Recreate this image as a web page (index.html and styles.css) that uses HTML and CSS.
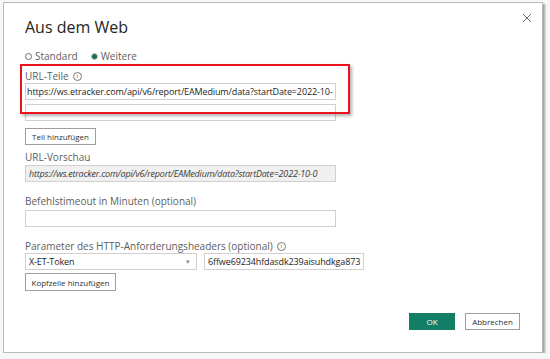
FILE: index.html
```html
<!DOCTYPE html>
<html lang="de">
<head>
  <meta charset="UTF-8" />
  <title>Aus dem Web</title>
  <link rel="stylesheet" href="styles.css">
</head>
<body>
  <div class="dialog">
    <button class="close" aria-label="Schließen">
      <svg width="10" height="10" viewBox="0 0 10 10"><path d="M1 1L9 9M9 1L1 9" stroke="#6e6e6e" stroke-width="1"/></svg>
    </button>
    <h1 class="title">Aus dem Web</h1>

    <div class="radios">
      <label class="radio"><span class="dot"></span>Standard</label>
      <label class="radio checked"><span class="dot"></span>Weitere</label>
    </div>

    <div class="label first">URL-Teile <span class="info">i</span></div>
    <div class="field wide">https://ws.etracker.com/api/v6/report/EAMedium/data?startDate=2022-10-</div>
    <div class="field wide gap"></div>
    <button class="btn add">Teil hinzufügen</button>

    <div class="label">URL-Vorschau</div>
    <div class="field wide preview">https://ws.etracker.com/api/v6/report/EAMedium/data?startDate=2022-10-0</div>

    <div class="label section">Befehlstimeout in Minuten (optional)</div>
    <div class="field wide timeout"></div>

    <div class="label section">Parameter des HTTP-Anforderungsheaders (optional) <span class="info">i</span></div>
    <div class="header-row">
      <div class="field select">X-ET-Token<span class="arrow">&#9662;</span></div>
      <div class="field token">6ffwe69234hfdasdk239aisuhdkga873</div>
    </div>
    <button class="btn add2">Kopfzeile hinzufügen</button>

    <div class="footer">
      <button class="btn ok">OK</button>
      <button class="btn cancel">Abbrechen</button>
    </div>

    <div class="highlight"></div>
  </div>
</body>
</html>
```

FILE: styles.css
```css
body {
  margin: 0;
  background: #f7f7f7;
  font-family: "Open Sans", "Noto Sans", sans-serif;
  color: #252423;
}
.dialog {
  position: relative;
  box-sizing: border-box;
  width: 540px;
  height: 351px;
  margin: 2px 0 0 3px;
  padding: 0 22px 0 21px;
  background: #fff;
  border: 1px solid #b9b9b9;
  box-shadow: 2px 2px 2px rgba(0,0,0,0.35);
  display: flex;
  flex-direction: column;
  align-items: flex-start;
}
.close {
  position: absolute;
  top: 8px;
  right: 10px;
  border: none;
  background: none;
  padding: 0;
  width: 10px;
  height: 10px;
}
.title {
  margin: 14px 0 0;
  font-size: 16px;
  line-height: 20px;
  font-weight: 400;
  color: #252423;
}
.radios {
  margin-top: 13px;
  display: flex;
  gap: 13px;
  font-size: 10px;
  line-height: 12px;
  color: #605e5c;
}
.radio {
  display: flex;
  align-items: center;
}
.dot {
  box-sizing: border-box;
  width: 7px;
  height: 7px;
  margin-right: 3px;
  border: 1px solid #6a6a6a;
  border-radius: 50%;
}
.radio.checked .dot {
  background: #1b6b58;
  border-color: #b8c9c4;
}
.label {
  margin-top: 6px;
  font-size: 10px;
  line-height: 12px;
  color: #605e5c;
  display: flex;
  align-items: center;
}
.label.first {
  margin-top: 8px;
}
.label.section {
  margin-top: 13px;
}
.info {
  display: inline-block;
  box-sizing: border-box;
  width: 9px;
  height: 9px;
  margin-left: 4px;
  border: 1px solid #777;
  border-radius: 50%;
  font-size: 6px;
  line-height: 7px;
  text-align: center;
  color: #555;
}
.field {
  box-sizing: border-box;
  height: 17px;
  margin-top: 1px;
  padding: 0 1px;
  border: 1px solid #d2d0ce;
  font-size: 9px;
  letter-spacing: -0.12px;
  line-height: 15px;
  color: #252423;
  white-space: nowrap;
  overflow: hidden;
}
.wide {
  width: 311px;
}
.gap {
  margin-top: 4px;
}
.preview {
  margin-top: 2px;
  padding-left: 3px;
  background: #f0f0f0;
  font-style: italic;
  letter-spacing: -0.2px;
  color: #3b3a39;
}
.timeout {
  margin-top: 3px;
}
.header-row {
  display: flex;
  gap: 7px;
  margin-top: 1px;
}
.select {
  width: 172px;
  margin-top: 0;
  padding-left: 3px;
  display: flex;
  justify-content: space-between;
}
.arrow {
  font-size: 7px;
  color: #888;
  padding-right: 5px;
}
.token {
  width: 160px;
  margin-top: 0;
  padding-left: 3px;
}
.btn {
  box-sizing: border-box;
  height: 17px;
  padding: 0 4px;
  border: 1px solid #9e9d9b;
  background: #fff;
  font-family: inherit;
  font-size: 8px;
  line-height: 15px;
  color: #323130;
  white-space: nowrap;
}
.add {
  margin-top: 7px;
  width: 71px;
}
.add2 {
  margin-top: 3px;
  width: 91px;
  height: 18px;
}
.footer {
  align-self: flex-end;
  display: flex;
  gap: 10px;
  margin-top: 22px;
}
.ok {
  width: 46px;
  background: #127e66;
  border-color: #127e66;
  color: #fff;
}
.cancel {
  width: 55px;
}
.highlight {
  position: absolute;
  left: 16px;
  top: 61px;
  box-sizing: border-box;
  width: 330px;
  height: 50px;
  border: 2px solid #e8161c;
  box-shadow: 2px 2px 3px rgba(0,0,0,0.3);
}
```
